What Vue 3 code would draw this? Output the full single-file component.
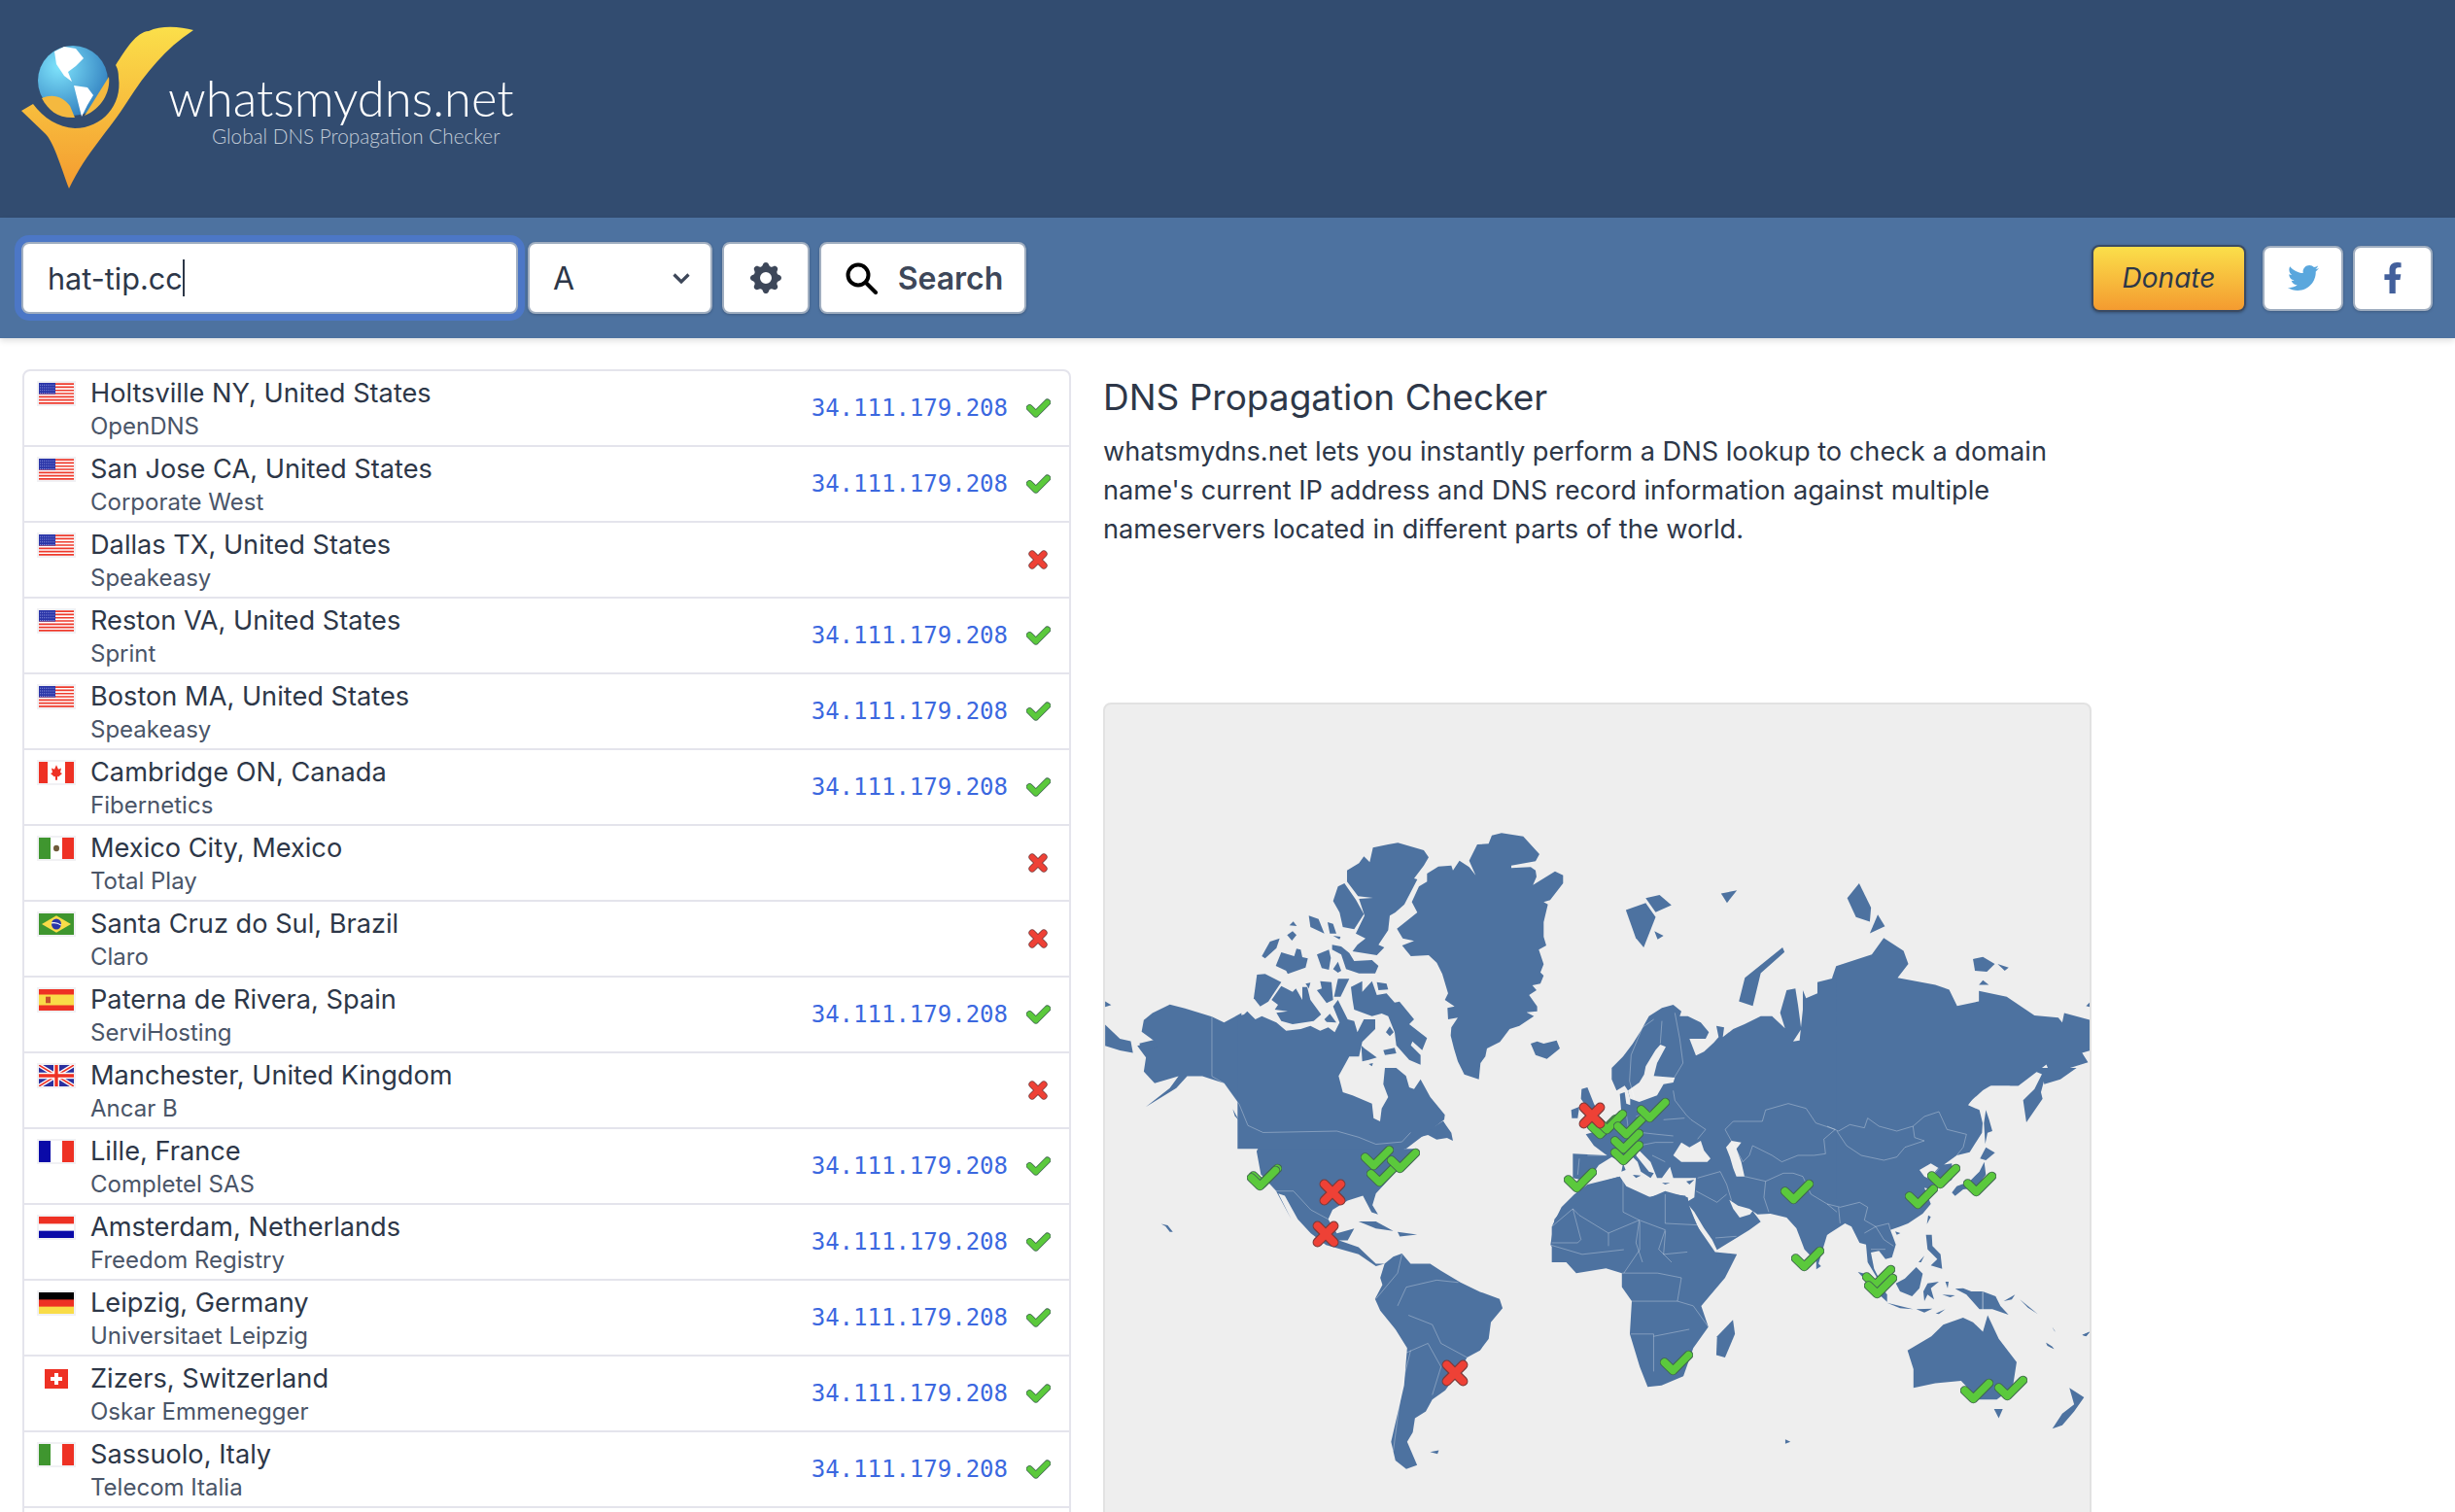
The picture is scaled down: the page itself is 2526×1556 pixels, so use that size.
<script setup>
const rows = [
  { name: 'Holtsville NY, United States', org: 'OpenDNS', flag: 'us', ok: true },
  { name: 'San Jose CA, United States', org: 'Corporate West', flag: 'us', ok: true },
  { name: 'Dallas TX, United States', org: 'Speakeasy', flag: 'us', ok: false },
  { name: 'Reston VA, United States', org: 'Sprint', flag: 'us', ok: true },
  { name: 'Boston MA, United States', org: 'Speakeasy', flag: 'us', ok: true },
  { name: 'Cambridge ON, Canada', org: 'Fibernetics', flag: 'ca', ok: true },
  { name: 'Mexico City, Mexico', org: 'Total Play', flag: 'mx', ok: false },
  { name: 'Santa Cruz do Sul, Brazil', org: 'Claro', flag: 'br', ok: false },
  { name: 'Paterna de Rivera, Spain', org: 'ServiHosting', flag: 'es', ok: true },
  { name: 'Manchester, United Kingdom', org: 'Ancar B', flag: 'gb', ok: false },
  { name: 'Lille, France', org: 'Completel SAS', flag: 'fr', ok: true },
  { name: 'Amsterdam, Netherlands', org: 'Freedom Registry', flag: 'nl', ok: true },
  { name: 'Leipzig, Germany', org: 'Universitaet Leipzig', flag: 'de', ok: true },
  { name: 'Zizers, Switzerland', org: 'Oskar Emmenegger', flag: 'ch', ok: true },
  { name: 'Sassuolo, Italy', org: 'Telecom Italia', flag: 'it', ok: true }
]

const ip = '34.111.179.208'

// center of each marker, in page px
const checks = [
  [1302, 1211], [1300, 1213], [1417, 1192], [1423, 1209], [1444, 1195],
  [1650, 1160], [1657, 1155], [1677, 1160], [1701, 1143], [1674, 1175], [1674, 1187],
  [1626, 1215], [1849, 1227], [1860, 1296], [1725, 1403], [1933, 1315], [1935, 1324],
  [1977, 1232], [2000, 1211], [2037, 1219], [2034, 1432], [2069, 1429]
]
const crosses = [[1371, 1228], [1364, 1271], [1497, 1414], [1638, 1149]]

// americas, africa south, australia etc: coordinates of a 2.24 x 2.074 scale
const landWest = [
  'M105,520 L125,505 L165,487 L200,495 L262,513 L290,525 L330,505 L330,780 L797,729 L770,750 L795,735 L815,770 L780,775 L760,765 L720,775 L705,795 L735,795 L690,840 L660,870 L640,890 L632,915 L645,935 L630,930 L610,895 L575,905 L540,925 L530,945 L540,960 L550,975 L590,965 L575,990 L555,990 L600,1005 L640,1040 L660,1040 L640,1045 L600,1020 L525,1000 L490,975 L460,945 L430,895 L415,890 L445,945 L410,885 L375,850 L365,800 L380,775 L350,745 L325,700 L290,655 L240,640 L205,640 L180,665 L110,705 L165,665 L185,640 L130,655 L105,630 L110,600 L90,575 L130,565 L100,545 Z',
  'M660,1040 L680,1025 L700,1018 L720,1040 L765,1040 L790,1055 L835,1080 L880,1100 L925,1115 L932,1135 L905,1165 L900,1200 L880,1225 L850,1240 L835,1265 L800,1310 L770,1330 L755,1355 L730,1370 L725,1400 L712,1420 L735,1470 L710,1478 L685,1460 L675,1420 L690,1360 L705,1300 L712,1220 L685,1180 L650,1140 L638,1115 L655,1085 L650,1070 Z',
  'M600,950 L640,950 L680,970 L640,965 Z', 'M690,972 L735,978 L695,982 Z',
  'M145,955 L160,958 L172,972 L165,972 L155,960 Z', 'M765,1442 L785,1438 L782,1446 Z',
  'M16,480 L30,488 L16,492 Z', 'M16,530 L50,560 L75,565 L80,590 L50,585 L16,575 Z',
  'M95,570 L130,562 L135,578 L100,585 Z', 'M310,710 L325,735 L315,725 Z'
]

const landEast = [
  'M870,430 L880,405 L970,380 L1000,345 L1050,372 L1062,400 L1035,430 L1130,445 L1165,455 L1185,490 L1240,480 L1240,458 L1310,470 L1380,510 L1440,515 L1450,525 L1455,505 L1520,520 L1520,585 L1500,590 L1515,610 L1420,635 L1410,615 L1340,660 L1320,660 L1280,655 L1250,670 L1210,700 L1170,760 L860,760 Z',
  'M170,945 L230,885 L270,870 L330,855 L345,880 L395,900 L450,890 L500,895 L530,960 L575,1015 L630,1020 L600,1070 L560,1110 L540,1130 L558,1175 L520,1220 L495,1280 L440,1300 L405,1303 L385,1260 L360,1190 L365,1120 L340,1090 L340,1060 L300,1050 L225,1060 L160,1000 Z',
  'M620,1160 L625,1190 L600,1240 L578,1235 L580,1195 Z',
  'M350,285 L400,270 L425,300 L395,365 L375,345 Z', 'M400,260 L435,253 L465,275 L425,290 Z', 'M422,330 L445,340 L430,348 Z',
  'M590,250 L630,243 L605,270 Z',
  'M635,480 L650,430 L745,365 L750,375 L690,420 L670,490 Z',
  'M908,260 L938,228 L968,280 L965,310 L930,300 Z', 'M965,335 L985,295 L1003,320 Z',
  'M1225,390 L1250,385 L1280,400 L1260,417 L1230,415 Z', 'M1287,400 L1315,408 L1305,415 Z', 'M1240,445 L1265,445 L1250,435 Z',
  'M1510,490 L1520,482 L1520,492 Z',
  'M1060,1225 L1120,1195 L1150,1170 L1200,1155 L1225,1165 L1250,1185 L1262,1150 L1290,1200 L1335,1250 L1325,1305 L1285,1330 L1240,1330 L1195,1290 L1130,1295 L1075,1305 L1075,1265 Z',
  'M1278,1350 L1300,1350 L1290,1370 Z',
  'M1468,1305 L1505,1325 L1480,1355 L1450,1385 L1425,1392 L1450,1360 L1480,1340 Z',
  'M830,1035 L842,1045 L830,1052 Z', 'M752,1415 L765,1420 L752,1424 Z',
  'M1410,1208 L1430,1222 L1420,1218 Z', 'M1500,1192 L1520,1185 L1510,1195 Z'
]

// the next three are 3x, with their own origin
const landArctic = [
  'M565,150 L600,128 L640,125 L645,140 L665,110 L695,130 L715,155 L695,110 L720,60 L755,58 L765,32 L795,25 L862,35 L912,90 L900,112 L825,125 L825,133 L885,130 L900,140 L903,160 L892,185 L960,143 L985,155 L985,180 L945,232 L925,238 L938,245 L925,300 L925,345 L933,372 L910,385 L925,430 L915,455 L925,465 L915,490 L890,495 L903,510 L880,525 L905,560 L905,575 L872,578 L895,590 L850,620 L820,630 L790,670 L750,690 L745,715 L730,735 L725,785 L680,770 L660,730 L648,690 L638,650 L640,625 L660,595 L630,600 L628,565 L650,560 L620,540 L630,520 L612,460 L595,425 L570,402 L515,405 L488,372 L525,358 L490,350 L472,320 L535,270 L518,238 L540,190 L565,175 Z',
  'M318,140 L355,118 L370,97 L388,115 L398,70 L445,60 L475,55 L555,78 L570,100 L555,125 L525,165 L535,168 L495,245 L467,270 L450,280 L445,325 L415,370 L433,378 L410,402 L335,390 L350,370 L375,350 L345,335 L372,280 L355,228 L398,225 L352,220 L318,175 Z',
  'M275,235 L290,190 L310,180 L345,230 L370,275 L340,322 L305,315 L295,270 Z',
  'M55,405 L80,360 L110,350 L100,380 L65,412 Z', 'M133,340 L150,328 L162,340 L148,357 Z', 'M140,310 L152,298 L163,312 Z',
  'M200,280 L230,290 L248,335 L205,315 Z', 'M258,300 L275,305 L285,335 L265,335 Z', 'M275,342 L298,345 L295,353 Z',
  'M98,435 L115,393 L155,405 L162,382 L175,385 L180,408 L197,412 L190,440 L135,460 L130,450 Z',
  'M225,400 L262,385 L268,410 L262,447 L240,442 Z',
  'M272,370 L300,375 L325,395 L340,420 L395,417 L415,435 L405,458 L355,458 L315,445 L300,400 L272,385 Z',
  'M275,445 L290,422 L300,450 L290,456 Z',
  'M30,535 L40,462 L65,460 L115,485 L75,545 L50,560 Z',
  'M85,540 L115,497 L150,515 L160,505 L180,540 L180,500 L195,500 L205,540 L238,585 L215,605 L150,615 L115,605 L100,580 L135,575 L95,570 L105,555 Z',
  'M190,490 L205,487 L200,505 Z', 'M225,510 L240,505 L235,482 L270,485 L275,540 L255,550 Z', 'M278,530 L290,475 L325,475 L298,530 Z',
  'M248,600 L265,583 L285,610 L255,608 Z',
  'M335,540 L330,500 L365,482 L365,515 L395,482 L410,525 L440,520 L465,548 L480,545 L525,600 L510,615 L565,658 L550,695 L520,668 L515,680 L545,710 L545,740 L510,725 L470,680 L465,640 L445,590 L425,582 L395,590 L340,570 Z',
  'M410,485 L440,490 L445,508 L415,510 Z',
  'M-20,590 L0,585 L10,575 L25,590 L35,600 L55,590 L100,610 L130,635 L175,630 L205,620 L235,635 L260,625 L280,640 L295,610 L275,560 L290,540 L320,600 L340,605 L350,640 L370,600 L405,600 L405,630 L365,670 L355,715 L325,715 L292,775 L305,825 L335,835 L395,860 L400,905 L420,915 L425,875 L445,840 L430,800 L435,750 L470,750 L500,775 L510,810 L525,815 L545,785 L575,840 L620,895 L618,910 L500,1000 L-20,1000 Z',
  'M362,680 L372,690 L410,718 L385,725 L365,730 Z', 'M430,695 L465,688 L470,705 L435,710 Z', 'M385,738 L398,735 L395,745 Z',
  'M590,965 L615,915 L640,950 L645,975 L625,965 L595,965 Z',
  'M885,675 L905,668 L925,675 L965,665 L975,690 L935,722 L900,710 Z'
]

const arcticLakes = ['M438,640 L450,622 L462,640 L450,652 Z']

const landEurope = [
  'M205,300 L240,265 L270,225 L295,185 L320,140 L360,115 L395,105 L420,125 L415,140 L440,140 L480,160 L505,190 L495,210 L445,210 L465,262 L490,250 L520,222 L535,205 L528,170 L552,175 L548,205 L580,180 L615,165 L665,140 L700,140 L740,178 L725,130 L745,60 L772,55 L780,105 L790,180 L765,218 L785,215 L795,120 L795,60 L805,85 L840,70 L840,35 L900,20 L900,785 L870,815 L843,905 L800,860 L775,795 L745,762 L695,750 L655,752 L630,735 L595,725 L568,707 L580,735 L600,762 L632,752 L640,742 L665,775 L630,800 L590,825 L530,862 L515,830 L490,795 L460,745 L435,715 L460,700 L465,640 L395,640 L385,605 L360,640 L345,640 L325,590 L290,555 L280,570 L320,620 L335,625 L325,640 L295,620 L285,590 L270,575 L235,590 L205,575 L165,600 L130,650 L85,640 L85,565 L190,570 L150,540 L125,505 L160,495 L235,440 L230,380 L245,375 L250,410 L262,415 L262,395 L255,370 L245,355 L220,370 L205,335 Z',
  'M112,365 L130,360 L150,410 L165,440 L120,460 L130,425 L110,395 Z', 'M80,430 L105,420 L100,455 L82,455 Z',
  'M240,595 L248,615 L235,620 Z', 'M270,630 L295,632 L280,640 Z', 'M360,655 L385,655 L370,660 Z', 'M435,650 L460,645 L445,660 Z',
  'M20,790 L50,730 L90,690 L130,660 L230,635 L250,665 L325,700 L370,680 L440,700 L445,735 L490,830 L525,880 L530,900 L20,900 Z'
]

const seasEurope = [
  'M355,228 L372,235 L345,285 L335,325 L400,330 L395,345 L365,350 L345,385 L290,405 L262,395 L255,370 L290,345 L305,320 L310,295 L340,245 Z',
  'M395,570 L420,530 L445,545 L480,525 L490,555 L510,580 L500,590 L420,590 Z',
  'M558,545 L575,525 L605,530 L590,550 L605,590 L615,635 L590,635 L580,610 L570,575 Z'
]

const landAsia = [
  'M0,0 L770,0 L720,35 L670,50 L665,20 L640,10 L600,40 L590,55 L480,55 L435,115 L470,130 L480,170 L478,200 L440,260 L400,270 L345,310 L320,295 L285,315 L300,335 L320,345 L300,360 L350,300 L385,295 L385,345 L350,365 L335,350 L320,375 L300,370 L320,420 L295,450 L250,480 L225,490 L195,500 L212,545 L200,585 L180,590 L160,565 L135,570 L145,620 L185,700 L125,600 L120,545 L100,540 L75,490 L55,480 L0,515 Z',
  'M490,130 L500,160 L510,195 L495,200 L488,235 L484,170 Z',
  'M472,280 L490,245 L518,262 L490,285 Z',
  'M385,385 L400,365 L440,350 L470,320 L485,290 L490,330 L460,370 L420,375 L395,395 Z',
  'M605,100 L640,65 L670,5 L680,0 L660,75 L665,95 L615,168 Z',
  'M95,630 L135,640 L185,700 L185,722 L150,690 Z',
  'M212,665 L240,650 L275,615 L295,635 L285,680 L262,705 L225,690 Z',
  'M185,725 L265,745 L225,742 Z',
  'M297,690 L310,665 L345,660 L320,680 L330,715 L310,700 L300,720 Z',
  'M305,515 L323,515 L325,550 L350,575 L355,620 L320,610 L340,590 L310,560 Z',
  'M395,682 L420,680 L445,690 L480,690 L520,705 L535,735 L560,762 L510,745 L470,745 L430,700 Z',
  'M312,455 L320,460 L308,482 Z', 'M210,505 L226,510 L215,515 Z',
  'M545,720 L580,700 L570,715 Z', 'M595,715 L650,760 L620,740 Z', 'M282,600 L300,580 L290,600 Z',
  'M275,745 L325,743 L300,755 Z', 'M335,758 L365,745 L345,760 Z', 'M355,700 L395,702 L380,708 Z', 'M365,660 L375,660 L372,680 Z',
  'M675,848 L695,860 L700,868 L680,858 Z', 'M695,800 L705,815 L700,810 Z', 'M788,825 L810,815 L800,828 Z'
]

const bordersWest = [
  'M262,513 L262,640 L290,655 L325,700 L345,745 L380,760 L550,757 L600,770 L640,785 L700,780 L720,760',
  'M375,850 L410,885 L450,885 L490,925 L530,945',
  'M700,1020 L690,1060 L640,1115', 'M690,1130 L710,1090 L780,1075 L830,1080',
  'M715,1150 L770,1170 L790,1210 L850,1240', 'M710,1230 L760,1210 L790,1260 L770,1320',
  'M720,1225 L700,1300 L680,1440'
]

const bordersEast = [
  'M340,1060 L430,1060 L490,1070 L480,1120 L365,1120', 'M480,1120 L520,1130 L558,1175',
  'M362,1190 L420,1190 L420,1270', 'M420,1195 L510,1180', 'M160,1000 L240,1020 L345,1010',
  'M385,950 L385,1010 L345,1060', 'M450,970 L445,1020 L505,1015', 'M1250,1100 L1250,1140'
]

const bordersEurope = [
  'M335,150 L300,175 L265,260 L260,340 L275,395', 'M360,155 L355,225', 'M400,130 L415,210 L425,285 L395,335',
  'M395,370 L400,400 L435,445 L450,460 L495,490 L470,520', 'M365,460 L430,455', 'M280,450 L360,420',
  'M300,500 L345,505 L395,510', 'M290,540 L340,530 L395,530', 'M330,570 L370,590', 'M250,440 L260,520 L235,550',
  'M105,580 L100,630', 'M190,570 L130,570',
  'M555,490 L580,465 L670,465 L680,430 L750,410 L805,425 L835,470 L895,490 L860,520 L865,565 L830,570 L780,570 L730,590 L700,570 L640,540 L630,570 L610,590 L555,490',
  'M615,635 L680,650 L675,700 L690,745', 'M680,650 L735,625 L765,625 L795,635 L820,690 L870,720 L900,745',
  'M540,620 L560,660 L575,710', 'M470,640 L540,620', 'M465,680 L530,715 L560,690', 'M525,825 L590,820',
  'M370,690 L370,780 L470,785', 'M240,640 L240,745 L290,770 L195,810 L105,755 L85,735 L20,790', 'M85,735 L110,830 L100,840',
  'M290,770 L370,800', 'M195,810 L195,850', 'M100,840 L20,840', 'M290,770 L280,840 L300,900', 'M370,800 L350,860 L390,900'
]

const bordersAsia = [
  'M0,180 L35,195 L70,175 L115,185 L125,155 L160,180 L215,195 L265,180 L300,150 L345,135 L370,190 L430,205 L420,245 L400,270',
  'M265,180 L270,215 L300,225 L240,245 L215,275 L175,285 L105,270 L60,240 L30,195',
  'M0,420 L40,430 L100,415 L125,430 L115,470 L150,490 L190,480 L195,500',
  'M115,510 L150,490 L175,530 L205,550', 'M345,310 L320,340', 'M35,430 L40,480', 'M480,690 L480,745', 'M135,560 L180,560'
]
</script>

<template>
  <div class="page">
    <svg width="0" height="0" class="defs">
      <defs>
        <symbol id="check" viewBox="0 0 33 27" preserveAspectRatio="none">
          <path d="M4.5 13 L13 21.5 L28.5 5.5" fill="none" stroke="#3f6650" stroke-width="9.5" stroke-linejoin="round" stroke-linecap="round" />
          <path d="M4.5 13 L13 21.5 L28.5 5.5" fill="none" stroke="#5bc93c" stroke-width="7.5" stroke-linejoin="round" stroke-linecap="round" />
        </symbol>
        <symbol id="cross" viewBox="0 0 25 25">
          <path d="M5 5 L20 20 M20 5 L5 20" fill="none" stroke="#7a3a3a" stroke-width="9" stroke-linecap="round" />
          <path d="M5 5 L20 20 M20 5 L5 20" fill="none" stroke="#ee4136" stroke-width="7" stroke-linecap="round" />
        </symbol>
        <linearGradient id="logoGold" x1="0" y1="0" x2="0" y2="1">
          <stop offset="0" stop-color="#fbdf4a" />
          <stop offset="1" stop-color="#f49b30" />
        </linearGradient>
        <radialGradient id="logoGlobe" cx="0.3" cy="0.3" r="0.8">
          <stop offset="0" stop-color="#7fe4fc" />
          <stop offset="1" stop-color="#2f7cbd" />
        </radialGradient>
      </defs>
    </svg>

    <header class="top">
      <svg class="logo" width="210" height="224" viewBox="0 0 210 224">
        <path d="M22 114 L34 107 C45 122 60 131 77 132 C105 132 126 108 122 80 Q122 72 119 67 C130 50 140 33 153 32 C165 26 185 27 199 31 C170 50 150 75 132 103 C112 135 90 155 71 194 C62 170 55 145 46 137 Z" fill="url(#logoGold)" />
        <circle cx="75" cy="83" r="36" fill="url(#logoGlobe)" />
        <path d="M56 53 L66 48 L78 50 L86 60 L78 68 L70 74 L74 84 L66 78 L58 66 Z M76 88 L90 90 L96 98 L90 108 L84 120 L80 104 Z" fill="#fff" />
        <path d="M43 101 C55 96 65 100 72 109 L77 121 C60 122 50 114 43 101 Z" fill="#f4b93f" />
        <path d="M87 119 L112 79 C114 95 104 112 87 119 Z" fill="#f4b93f" />
      </svg>
      <div class="brand">
        <div class="brand-name">whatsmydns.net</div>
        <div class="brand-tag">Global DNS Propagation Checker</div>
      </div>
    </header>

    <div class="toolbar">
      <div class="input">hat-tip.cc<span class="caret"></span></div>
      <div class="box select">
        <span>A</span>
        <svg width="18" height="11" viewBox="0 0 18 11"><path d="M1.5 1.5 L9 9 L16.5 1.5" fill="none" stroke="#3d4759" stroke-width="3.2" /></svg>
      </div>
      <button class="box gear">
        <svg width="40" height="40" viewBox="0 0 20 20"><path fill="#3d4759" fill-rule="evenodd" d="M11.49 3.17c-.38-1.56-2.6-1.56-2.98 0a1.532 1.532 0 01-2.286.948c-1.372-.836-2.942.734-2.106 2.106.54.886.061 2.042-.947 2.287-1.561.379-1.561 2.6 0 2.978a1.532 1.532 0 01.947 2.287c-.836 1.372.734 2.942 2.106 2.106a1.532 1.532 0 012.287.947c.379 1.561 2.6 1.561 2.978 0a1.533 1.533 0 012.287-.947c1.372.836 2.942-.734 2.106-2.106a1.533 1.533 0 01.947-2.287c1.561-.379 1.561-2.6 0-2.978a1.532 1.532 0 01-.947-2.287c.836-1.372-.734-2.942-2.106-2.106a1.532 1.532 0 01-2.287-.947zM10 13a3 3 0 100-6 3 3 0 000 6z" /></svg>
      </button>
      <button class="box search">
        <svg width="34" height="34" viewBox="0 0 34 34"><circle cx="14" cy="14" r="10.5" fill="none" stroke="#000" stroke-width="4" /><path d="M21.5 21.5 L32 32" stroke="#000" stroke-width="4" stroke-linecap="round" /></svg>
        <span>Search</span>
      </button>
      <div class="spacer"></div>
      <button class="donate">Donate</button>
      <button class="box social twitter">
        <svg width="32" height="32" viewBox="0 0 512 512"><path fill="#5aa7dd" d="M459.37 151.716c.325 4.548.325 9.097.325 13.645 0 138.72-105.583 298.558-298.558 298.558-59.452 0-114.68-17.219-161.137-47.106 8.447.974 16.568 1.299 25.34 1.299 49.055 0 94.213-16.568 130.274-44.832-46.132-.975-84.792-31.188-98.112-72.772 6.498.974 12.995 1.624 19.818 1.624 9.421 0 18.843-1.3 27.614-3.573-48.081-9.747-84.143-51.98-84.143-102.985v-1.299c13.969 7.797 30.214 12.67 47.431 13.319-28.264-18.843-46.781-51.005-46.781-87.391 0-19.492 5.197-37.36 14.294-52.954 51.655 63.675 129.3 105.258 216.365 109.807-1.624-7.797-2.599-15.918-2.599-24.04 0-57.828 46.782-104.934 104.934-104.934 30.213 0 57.502 12.67 76.67 33.137 23.715-4.548 46.456-13.32 66.599-25.34-7.798 24.366-24.366 44.833-46.132 57.827 21.117-2.273 41.584-8.122 60.426-16.243-14.292 20.791-32.161 39.308-52.628 54.253z" /></svg>
      </button>
      <button class="box social fb">
        <svg width="20" height="32" viewBox="0 0 320 512"><path fill="#43609c" d="M279.14 288l14.22-92.66h-88.91v-60.13c0-25.35 12.42-50.06 52.24-50.06h40.42V6.26S260.43 0 225.36 0c-73.22 0-121.08 44.38-121.08 124.72v70.62H22.89V288h81.39v224h100.17V288z" /></svg>
      </button>
    </div>

    <main class="main">
      <div class="list">
        <div v-for="row in rows" :key="row.name" class="row">
          <div class="flag-wrap">
            <svg v-if="row.flag === 'ch'" class="flag-ch" width="24" height="20" viewBox="0 0 24 20">
              <rect width="24" height="20" fill="#ee3124" /><path d="M10 4h4v4h4v4h-4v4h-4v-4H6V8h4z" fill="#fff" />
            </svg>
            <svg v-else class="flag" width="40" height="26" viewBox="0 0 36 20" preserveAspectRatio="none">
              <template v-if="row.flag === 'us'">
                <rect width="36" height="20" fill="#fff" />
                <path d="M0 1h36M0 4h36M0 7h36M0 10h36M0 13h36M0 16h36M0 19h36" stroke="#ee3a2c" stroke-width="1.5" />
                <rect width="17" height="10.5" fill="#2a35a8" />
                <path d="M1 2h15M1 4.5h15M1 7h15M1 9.5h15" stroke="#8a92da" stroke-width="1" stroke-dasharray="1 1" />
              </template>
              <template v-else-if="row.flag === 'ca'">
                <rect width="36" height="20" fill="#fff" /><rect width="9" height="20" fill="#ee3124" /><rect x="27" width="9" height="20" fill="#ee3124" />
                <path d="M18 3 L20 7 L23 6 L22 10 L24 11 L20 14 L19 13.5 L19 17 L17 17 L17 13.5 L16 14 L12 11 L14 10 L13 6 L16 7 Z" fill="#ee3124" />
              </template>
              <template v-else-if="row.flag === 'mx'">
                <rect width="36" height="20" fill="#fff" /><rect width="12" height="20" fill="#3f962f" /><rect x="24" width="12" height="20" fill="#ee3124" />
                <circle cx="18" cy="10" r="3" fill="#6f5a3a" />
              </template>
              <template v-else-if="row.flag === 'br'">
                <rect width="36" height="20" fill="#3f962f" /><path d="M18 2 L33 10 L18 18 L3 10 Z" fill="#f9dc48" /><circle cx="18" cy="10" r="5" fill="#2a35a8" /><path d="M13 9 Q18 8 23 11" stroke="#fff" fill="none" />
              </template>
              <template v-else-if="row.flag === 'es'">
                <rect width="36" height="20" fill="#ee3124" /><rect y="5" width="36" height="10" fill="#f9dc48" /><rect x="7" y="7" width="5" height="6" fill="#c8502c" />
              </template>
              <template v-else-if="row.flag === 'gb'">
                <rect width="36" height="20" fill="#2a2f9e" />
                <path d="M0 0 L36 20 M36 0 L0 20" stroke="#fff" stroke-width="4" />
                <path d="M0 0 L36 20 M36 0 L0 20" stroke="#ee3124" stroke-width="1.4" />
                <path d="M18 0V20M0 10H36" stroke="#fff" stroke-width="6" />
                <path d="M18 0V20M0 10H36" stroke="#ee3124" stroke-width="3.4" />
              </template>
              <template v-else-if="row.flag === 'fr'">
                <rect width="36" height="20" fill="#fff" /><rect width="12" height="20" fill="#0a0aa8" /><rect x="24" width="12" height="20" fill="#ee3124" />
              </template>
              <template v-else-if="row.flag === 'nl'">
                <rect width="36" height="20" fill="#fff" /><rect width="36" height="6.7" fill="#ee3124" /><rect y="13.3" width="36" height="6.7" fill="#0a0aa8" />
              </template>
              <template v-else-if="row.flag === 'de'">
                <rect width="36" height="20" fill="#ee3124" /><rect width="36" height="6.7" fill="#000" /><rect y="13.3" width="36" height="6.7" fill="#f9dc48" />
              </template>
              <template v-else>
                <rect width="36" height="20" fill="#fff" /><rect width="12" height="20" fill="#3f962f" /><rect x="24" width="12" height="20" fill="#ee3124" />
              </template>
            </svg>
          </div>
          <div class="place">
            <div class="name">{{ row.name }}</div>
            <div class="org">{{ row.org }}</div>
          </div>
          <div v-if="row.ok" class="ip">{{ ip }}</div>
          <div class="status">
            <svg v-if="row.ok" width="25" height="20"><use href="#check" /></svg>
            <svg v-else width="20" height="20"><use href="#cross" /></svg>
          </div>
        </div>
      </div>

      <section class="info">
        <h1>DNS Propagation Checker</h1>
        <p>whatsmydns.net lets you instantly perform a DNS lookup to check a domain<br>name's current IP address and DNS record information against multiple<br>nameservers located in different parts of the world.</p>
        <div class="map">
          <svg class="world" width="1017" height="900" viewBox="1135 724 1017 900">
            <g fill="#4d72a0">
              <g transform="translate(1130 800) scale(.4464 .4822)">
                <path v-for="d in landWest" :key="d" :d="d" />
              </g>
              <g transform="translate(1530 800) scale(.4082 .4822)">
                <path v-for="d in landEast" :key="d" :d="d" />
              </g>
              <g transform="translate(1280 850) scale(.3333)">
                <path v-for="d in landArctic" :key="d" :d="d" />
                <path v-for="d in arcticLakes" :key="d" :d="d" />
              </g>
              <g transform="translate(1880 1100) scale(.3333)">
                <path v-for="d in landAsia" :key="d" :d="d" />
              </g>
              <g transform="translate(1590 1000) scale(.3333)">
                <path v-for="d in landEurope" :key="d" :d="d" />
                <path v-for="d in seasEurope" :key="d" :d="d" fill="#eeeeee" />
              </g>
            </g>
            <g transform="translate(1130 800) scale(.4464 .4822)"><path v-for="d in bordersWest" :key="d" :d="d" class="border" /></g>
            <g transform="translate(1530 800) scale(.4082 .4822)"><path v-for="d in bordersEast" :key="d" :d="d" class="border" /></g>
            <g transform="translate(1590 1000) scale(.3333)"><path v-for="d in bordersEurope" :key="d" :d="d" class="border" /></g>
            <g transform="translate(1880 1100) scale(.3333)"><path v-for="d in bordersAsia" :key="d" :d="d" class="border" /></g>
            <use v-for="c in checks" :key="c.join()" href="#check" :x="c[0] - 17" :y="c[1] - 13" width="34" height="27" />
            <use v-for="c in crosses" :key="c.join()" href="#cross" :x="c[0] - 14" :y="c[1] - 14" width="28" height="28" />
          </svg>
        </div>
      </section>
    </main>
  </div>
</template>

<style>
html, body {
  margin: 0;
  overflow: hidden;
  height: 1556px;
  background: #fff;
}
</style>

<style scoped>
.page {
  width: 2526px;
  height: 1556px;
  overflow: hidden;
  font-family: Inter, "Liberation Sans", sans-serif;
  color: #2d3748;
}
.defs {
  position: absolute;
}
.top {
  height: 224px;
  background: #324c70;
  display: flex;
}
.logo {
  flex: none;
}
.brand {
  margin-left: -37px;
  padding-top: 72px;
}
.brand-name {
  font-family: Lato, sans-serif;
  font-weight: 300;
  font-size: 50.7px;
  line-height: 58px;
  color: #fff;
}
.brand-tag {
  font-family: Lato, sans-serif;
  font-weight: 300;
  font-size: 20.7px;
  line-height: 20px;
  margin-left: 45px;
  color: #c3ccd8;
}
.toolbar {
  height: 124px;
  padding: 0 23px 0 22px;
  box-sizing: border-box;
  background: #4d72a0;
  display: flex;
  align-items: center;
  gap: 10px;
  box-shadow: 0 3px 6px rgba(0, 0, 0, 0.12);
  position: relative;
}
.input {
  width: 511px;
  height: 74px;
  box-sizing: border-box;
  padding-left: 25px;
  background: #fff;
  border: 2px solid #a0aec0;
  border-radius: 8px;
  box-shadow: 0 0 0 7px #4c77c6;
  font-size: 30.6px;
  display: flex;
  align-items: center;
}
.caret {
  width: 2px;
  height: 38px;
  background: #2d3748;
}
.box {
  height: 74px;
  box-sizing: border-box;
  background: #fff;
  border: 2px solid #a0aec0;
  border-radius: 8px;
  box-shadow: 0 1px 3px rgba(0, 0, 0, 0.2);
  display: flex;
  align-items: center;
  justify-content: center;
  padding: 0;
  color: #2d3748;
  font-family: inherit;
}
.select {
  width: 190px;
  justify-content: space-between;
  padding: 0 21px 0 24px;
  font-size: 32px;
}
.gear {
  width: 90px;
}
.search {
  width: 213px;
  gap: 21px;
  padding-left: 2px;
  font-size: 32px;
  font-weight: 600;
  color: #3d4759;
}
.spacer {
  flex: 1;
}
.donate {
  width: 159px;
  height: 69px;
  margin-right: 7px;
  box-sizing: border-box;
  border: 2px solid #3a4a63;
  border-radius: 8px;
  background: linear-gradient(#fbdf4a, #f49b30);
  box-shadow: 0 1px 3px rgba(0, 0, 0, 0.3);
  font-family: inherit;
  font-size: 28px;
  font-style: italic;
  color: #2d3748;
  padding: 0;
}
.social {
  width: 83px;
  height: 67px;
}
.fb {
  width: 82px;
}
.main {
  display: flex;
  gap: 33px;
  padding: 32px 0 0 23px;
}
.list {
  width: 1079px;
  min-height: 1300px;
  box-sizing: border-box;
  border: 2px solid #e4e4ec;
  border-radius: 8px 8px 0 0;
}
.row {
  height: 78px;
  box-sizing: border-box;
  border-bottom: 2px solid #e4e4ec;
  padding: 0 19px 0 13px;
  display: flex;
  align-items: center;
}
.flag-wrap {
  width: 40px;
  height: 76px;
  flex: none;
  margin-right: 15px;
  display: flex;
  justify-content: center;
  align-items: flex-start;
  padding-top: 10px;
  box-sizing: border-box;
}
.flag {
  border: 2px solid #f1f1f4;
  box-sizing: border-box;
}
.flag-ch {
  margin-top: 3px;
}
.place {
  flex: 1;
  padding-bottom: 2px;
}
.name {
  font-size: 27.2px;
  line-height: 40px;
  color: #2d3748;
}
.org {
  font-size: 24px;
  line-height: 28px;
  color: #4a5568;
}
.ip {
  font-family: "DejaVu Sans Mono", monospace;
  font-size: 24px;
  color: #3b68df;
  margin-right: 18px;
}
.status {
  width: 26px;
  height: 20px;
  display: flex;
  justify-content: center;
}
.info {
  width: 1017px;
  padding-top: 5px;
}
h1 {
  margin: 0;
  font-size: 37px;
  line-height: 48px;
  font-weight: 400;
  color: #2d3748;
}
p {
  margin: 12px 0 0;
  font-size: 27.2px;
  line-height: 40px;
  color: #2d3748;
}
.map {
  margin-top: 158px;
  height: 900px;
  box-sizing: border-box;
  width: 1017px;
  background: #eeeeee;
  border: 2px solid #e2e2e2;
  border-radius: 8px;
  overflow: hidden;
}
.world {
  display: block;
  margin: -2px;
}
.border {
  fill: none;
  stroke: rgba(255, 255, 255, 0.3);
  stroke-width: 1;
  vector-effect: non-scaling-stroke;
}
</style>
